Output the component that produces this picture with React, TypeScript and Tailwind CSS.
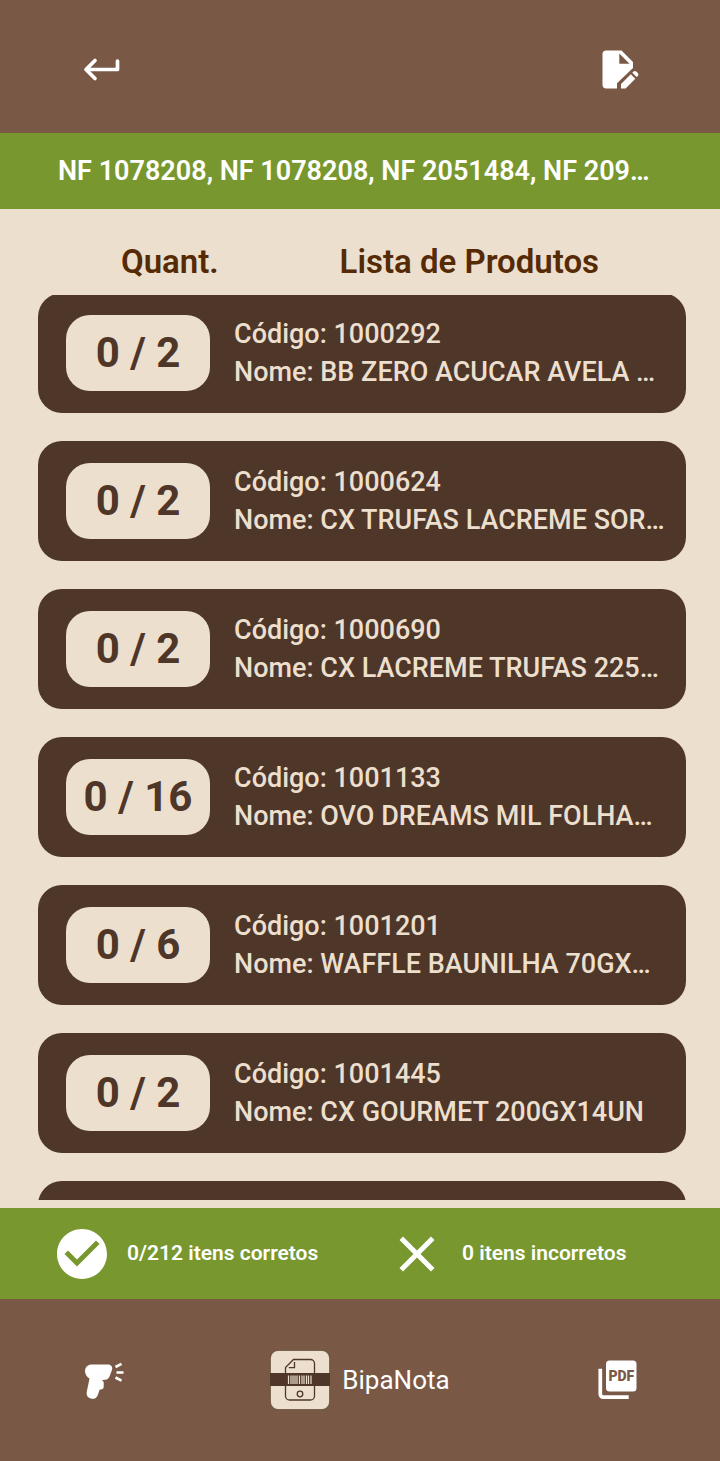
import { useEffect, useRef } from "react";
import { MdCheckCircle, MdClose } from "react-icons/md";

type Product = { code: string; name: string; total: number };

const products: Product[] = [
  { code: "1000292", name: "BB ZERO ACUCAR AVELA …", total: 2 },
  { code: "1000624", name: "CX TRUFAS LACREME SOR…", total: 2 },
  { code: "1000690", name: "CX LACREME TRUFAS 225…", total: 2 },
  { code: "1001133", name: "OVO DREAMS MIL FOLHA…", total: 16 },
  { code: "1001201", name: "WAFFLE BAUNILHA 70GX…", total: 6 },
  { code: "1001445", name: "CX GOURMET 200GX14UN", total: 2 },
];

function ReturnIcon() {
  return (
    <svg viewBox="0 0 45 45" className="size-[45px]" fill="none" stroke="currentColor" strokeWidth="3.7" strokeLinecap="round" strokeLinejoin="round" aria-hidden="true">
      <path d="M15 14.500 6 23.500l9 9M7 23.500h30.500v-8.500" />
    </svg>
  );
}

function EditDocumentIcon() {
  return (
    <svg viewBox="0 0 45 45" className="size-[45px]" fill="currentColor" aria-hidden="true">
      <path
        fillRule="evenodd"
        d="M11.200 4.500h15.300L38 16v6L22 37.200V42.500H11.200a3.700 3.700 0 0 1-3.700-3.700V8.200A3.700 3.700 0 0 1 11.200 4.500ZM24.300 7.500v10.200h10.200Z"
      />
      <path d="M26 42.500v-4.500l9.800-9.700 4.500 4.500L30.600 42.500ZM37.300 26.800l1.200-1.200a2 2 0 0 1 2.800 0l1.500 1.500a2 2 0 0 1 0 2.800l-1.200 1.200Z" />
    </svg>
  );
}

function ScannerIcon() {
  return (
    <svg viewBox="0 0 45 45" className="size-[45px]" aria-hidden="true">
      <path
        fill="currentColor"
        d="M12 6.500h16c3 0 5 2.500 4 5.400l-2.500 6.500c-.8 2-2.200 3.200-4.200 3.300l-2.800.2v1.300h.300c.6 0 .9.400.9 1v4.600c0 1.800-1.200 2.800-2.800 2.800h-1.200l-2 5.600c-1.200 3.300-4 4.200-7 3.300-3.200-1-4.600-3.600-3.900-6.800l2.700-13.200C7 19.300 5 16.200 5 13c0-3.800 3-6.500 7-6.500Z"
      />
      <path d="m35.500 9 6-3.200M36.500 14.500h7M35.500 19.500l6 3.200" fill="none" stroke="currentColor" strokeWidth="2.600" />
    </svg>
  );
}

function PdfIcon() {
  return (
    <svg viewBox="0 0 45 45" className="size-[45px]" aria-hidden="true">
      <rect x="11" y="2.500" width="30.500" height="31" rx="3.500" fill="currentColor" />
      <path d="M5.300 10.700v25.500a3 3 0 0 0 3 3h25.400" fill="none" stroke="currentColor" strokeWidth="3.700" />
      <text x="26.300" y="23.400" textAnchor="middle" fontSize="14" fontWeight="900" fill="#795946">
        PDF
      </text>
    </svg>
  );
}

function AppLogo() {
  return (
    <svg viewBox="0 0 60 60" className="size-[60px]" aria-hidden="true">
      <rect x="0.400" y="0.400" width="59.200" height="59.200" rx="8" fill="#ecdfce" stroke="#58402f" strokeWidth="0.700" />
      <g fill="none" stroke="#4e3629" strokeWidth="1.300">
        <path d="M23.500 9.500h17a4 4 0 0 1 4 4v32.500a4 4 0 0 1-4 4h-21a4 4 0 0 1-4-4V17.500Z" />
        <path d="M24.500 12v5.700h-5.700" />
        <circle cx="30" cy="44" r="2.800" />
      </g>
      <rect y="23" width="60" height="13" fill="#4e3629" />
      <path
        d="M18.500 25.500v8.500M21 25.500v8.500M23 25.500v8.500M25 25.500v8.500M27 25.500v8.500M29.500 25.500v8.500M32 25.500v8.500M34 25.500v8.500M36.500 25.500v8.500M38.500 25.500v8.500M41 25.500v8.500"
        stroke="#ecdfce"
        strokeWidth="1.200"
      />
    </svg>
  );
}

function ProductCard({ product }: { product: Product }) {
  return (
    <li className="flex h-[120px] shrink-0 items-center gap-6 rounded-3xl bg-[#4e3629] pr-5 pl-7">
      <span className="flex h-[76px] w-36 shrink-0 items-center justify-center rounded-3xl bg-[#ecdfce] text-[42px] leading-none font-bold whitespace-pre text-[#4e3629]">
        0 / {product.total}
      </span>
      <div className="min-w-0 text-[27px] leading-[38px] font-medium whitespace-nowrap text-[#ecdfce]">
        <p>Código: {product.code}</p>
        <p>Nome: {product.name}</p>
      </div>
    </li>
  );
}

export default function App() {
  const listRef = useRef<HTMLUListElement>(null);

  useEffect(() => {
    if (listRef.current) listRef.current.scrollTop = 2;
  }, []);

  return (
    <div className="flex h-screen flex-col bg-[#ecdfce] font-['Roboto',sans-serif]">
      <header className="flex h-[133px] shrink-0 items-center justify-between bg-[#795946] px-20 pt-1 text-white">
        <button type="button" aria-label="Voltar">
          <ReturnIcon />
        </button>
        <button type="button" aria-label="Editar nota">
          <EditDocumentIcon />
        </button>
      </header>

      <div className="flex h-[76px] shrink-0 items-center bg-[#78972e] px-[58px]">
        <p className="text-[27px] font-semibold whitespace-nowrap text-white">NF 1078208, NF 1078208, NF 2051484, NF 209…</p>
      </div>

      <div className="flex h-[86px] shrink-0 items-center justify-evenly pt-5 text-[33px] leading-[40px] font-semibold text-[#562a04]">
        <h2>Quant.</h2>
        <h2>Lista de Produtos</h2>
      </div>

      <ul ref={listRef} className="mr-[34px] mb-2 ml-[38px] flex min-h-0 flex-1 flex-col gap-7 overflow-y-auto [scrollbar-width:none]">
        {products.map((product) => (
          <ProductCard key={product.code} product={product} />
        ))}
        <li aria-hidden="true" className="h-[120px] shrink-0 rounded-3xl bg-[#4e3629]" />
      </ul>

      <div className="grid h-[91px] shrink-0 grid-cols-2 items-center bg-[#78972e] px-[52px] text-[21px] font-semibold text-white">
        <div className="flex items-center gap-[15px]">
          <MdCheckCircle className="size-[60px]" aria-hidden="true" />
          <span>0/212 itens corretos</span>
        </div>
        <div className="flex items-center gap-[15px] pl-[27px]">
          <MdClose className="size-[60px]" aria-hidden="true" />
          <span>0 itens incorretos</span>
        </div>
      </div>

      <footer className="flex h-[162px] shrink-0 items-center justify-between bg-[#795946] px-20 text-white">
        <button type="button" aria-label="Leitor de código">
          <ScannerIcon />
        </button>
        <div className="flex items-center gap-3">
          <AppLogo />
          <span className="text-[26px]">BipaNota</span>
        </div>
        <button type="button" aria-label="Gerar PDF">
          <PdfIcon />
        </button>
      </footer>
    </div>
  );
}
